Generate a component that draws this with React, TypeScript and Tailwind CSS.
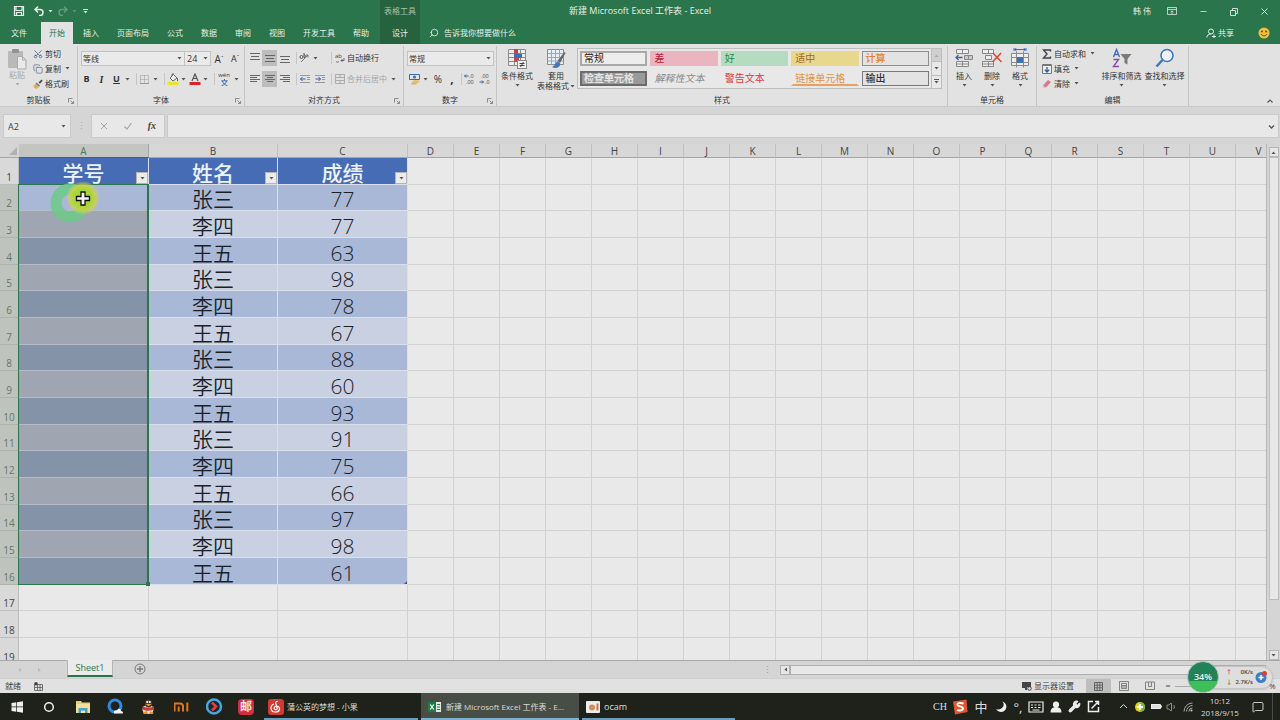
import React from 'react';
import { Minus, X, Search, Copy, Scissors, Wrench, Volume1, MessageSquare } from 'lucide-react';

type Kids = { children?: React.ReactNode };

function Caret({ light = false }: { light?: boolean }) {
  return (
    <svg width="5" height="3" viewBox="0 0 5 3" className="shrink-0">
      <path d="M0.5 0h4L2.5 2.6z" fill={light ? '#cfe3d7' : '#555'} />
    </svg>
  );
}

function Svg({ s = 16, h, children }: Kids & { s?: number; h?: number }) {
  return (
    <svg width={s} height={h ?? s} viewBox={`0 0 ${s} ${h ?? s}`} fill="none" className="shrink-0">
      {children}
    </svg>
  );
}

function Sep() {
  return <span className="h-3 w-px shrink-0 bg-[#c6c6c6]" />;
}

function IconBtn({ label, on = false, children }: Kids & { label: string; on?: boolean }) {
  return (
    <button
      type="button"
      aria-label={label}
      className={`flex h-4 w-[15px] shrink-0 items-center justify-center ${on ? 'bg-[#bdbdbd]' : ''}`}
    >
      {children}
    </button>
  );
}

function DropBtn({ label }: { label: string }) {
  return (
    <button type="button" aria-label={label} className="flex h-4 w-[7px] shrink-0 items-center justify-center">
      <Caret />
    </button>
  );
}

function Group({ title, width, launcher = false, children }: Kids & { title: string; width: string; launcher?: boolean }) {
  return (
    <section aria-label={title} className={`${width} flex shrink-0 flex-col border-r border-[#c4c4c4]`}>
      <div className="min-h-0 flex-1">{children}</div>
      <div className="relative h-3 text-center leading-3">
        {title}
        {launcher && (
          <button type="button" aria-label={`${title}设置`} className="absolute right-[3px] bottom-0.5">
            <Svg s={6}>
              <path d="M0.5 4.5v-4h4M2.5 2.5l3 3M5.5 3v2.5H3" stroke="#777" strokeWidth="0.8" />
            </Svg>
          </button>
        )}
      </div>
    </section>
  );
}

function BigBtn({ icon, lines, width }: { icon: React.ReactNode; lines: string[]; width: string }) {
  return (
    <button type="button" className={`${width} flex shrink-0 flex-col items-center whitespace-nowrap`}>
      <span className="flex h-[23px] items-start">{icon}</span>
      {lines.length === 1 ? (
        <>
          <span className="leading-[10px]">{lines[0]}</span>
          <span className="flex h-[9px] items-center">
            <Caret />
          </span>
        </>
      ) : (
        <>
          <span className="leading-[10px]">{lines[0]}</span>
          <span className="flex items-center gap-px leading-[10px]">
            {lines[1]}
            <Caret />
          </span>
        </>
      )}
    </button>
  );
}

function SmallBtn({ icon, text, drop = false }: { icon: React.ReactNode; text: string; drop?: boolean }) {
  return (
    <button type="button" className="flex h-[15px] items-center whitespace-nowrap">
      <span className="flex w-[15px] items-center justify-center">{icon}</span>
      {text}
      {drop && (
        <span className="flex h-full items-center pl-1">
          <Caret />
        </span>
      )}
    </button>
  );
}

function Lines({ ys, xs }: { ys: number[]; xs: [number, number][] }) {
  return (
    <Svg s={10}>
      {ys.map((y, i) => (
        <path key={y} d={`M${xs[i % xs.length][0]} ${y}.5H${xs[i % xs.length][1]}`} stroke="#666" />
      ))}
    </Svg>
  );
}

function Ribbon() {
  const styles: [string, string][] = [
    ['常规', 'border-2 border-[#a9a9a9] bg-[#ededed] text-[#222]'],
    ['差', 'border-2 border-transparent bg-[#eab4c0] text-[#b01f3c]'],
    ['好', 'border-2 border-transparent bg-[#b5dcc0] text-[#2a8a44]'],
    ['适中', 'border-2 border-transparent bg-[#e8d88e] text-[#9c6a1c]'],
    ['计算', 'border border-[#8e8e8e] bg-[#e3e3e3] px-[3px] text-[#e0802f] font-medium'],
    ['检查单元格', 'border-2 border-[#6b6b6b] bg-[#9a9a9a] font-bold text-[#e4e4e4]'],
    ['解释性文本', 'border-2 border-transparent italic text-[#8a8a8a]'],
    ['警告文本', 'border-2 border-transparent text-[#dd3a3a]'],
    ['链接单元格', 'border-2 border-transparent border-b-[#e8a063] text-[#e09447]'],
    ['输出', 'border border-[#7a7a7a] bg-[#e3e3e3] px-[3px] text-[#333] font-medium'],
  ];
  return (
    <div className="flex h-[63px] shrink-0 border-b border-[#c9c9c9] bg-[#e2e2e2] pt-0.5 text-[8px] text-[#333]">
      <Group title="剪贴板" width="w-[78px]" launcher>
        <div className="flex pl-1">
          <button type="button" className="flex w-[26px] flex-col items-center pt-0.5 text-[#a8a8a8]">
            <Svg s={20} h={22}>
              <rect x="1" y="3" width="15" height="17" rx="1" fill="#b9b9b9" />
              <rect x="5" y="1" width="7" height="4" rx="1" fill="#929292" />
              <path d="M10.500 8.500h5l3.500 3.500v9h-8.500z" fill="#e9e9e9" stroke="#aaa" />
              <path d="M15.500 8.500v3.500h3.500" stroke="#aaa" />
            </Svg>
            <span className="leading-[10px]">粘贴</span>
            <span className="flex h-2 items-center opacity-40">
              <Caret />
            </span>
          </button>
          <div className="flex flex-col items-start">
            <SmallBtn icon={<Scissors size={10} color="#4d6b91" className="-rotate-90" />} text="剪切" />
            <SmallBtn icon={<Copy size={10} color="#6f7f93" />} text="复制" drop />
            <SmallBtn
              icon={
                <Svg s={10}>
                  <path d="M5.500 3.500L8.500 0.500l1.200 1.200-2.700 3z" fill="#4d4d4d" />
                  <path d="M3.500 3.500l3.500 3-1 1.300-3.500-3z" fill="#777" />
                  <path d="M2.300 4.800L0 7.500l3 2.500 3-1.800z" fill="#e3ad4c" />
                </Svg>
              }
              text="格式刷"
            />
          </div>
        </div>
      </Group>

      <Group title="字体" width="w-[167px]" launcher>
        <div className="mt-[5px] flex h-[15px] items-center pl-[3px]">
          <label className="relative flex h-[15px] w-[104px] items-center">
            <select aria-label="字体" className="h-full w-full appearance-none border border-[#c3c3c3] bg-[#eaeaea] px-px">
              <option>等线</option>
            </select>
            <span className="pointer-events-none absolute right-[3px]">
              <Caret />
            </span>
          </label>
          <label className="relative flex h-[15px] w-[26px] items-center">
            <select aria-label="字号" className="h-full w-full appearance-none border border-l-0 border-[#c3c3c3] bg-[#eaeaea] px-0.5 text-[9px]">
              <option>24</option>
            </select>
            <span className="pointer-events-none absolute right-[3px]">
              <Caret />
            </span>
          </label>
          <button type="button" className="w-4 text-center text-[10px] leading-3">
            A<sup className="text-[6px]">ˆ</sup>
          </button>
          <button type="button" className="w-4 text-center text-[9px] leading-3">
            A<sup className="text-[6px]">ˇ</sup>
          </button>
        </div>
        <div className="mt-[5px] flex items-center pl-px">
          <IconBtn label="加粗"><b className="text-[9px]">B</b></IconBtn>
          <IconBtn label="倾斜"><i className="font-['Liberation_Serif',serif] text-[10px] font-bold">I</i></IconBtn>
          <IconBtn label="下划线"><u className="text-[9px] font-bold">U</u></IconBtn>
          <DropBtn label="下划线样式" />
          <span className="w-[5px]" />
          <Sep />
          <IconBtn label="边框">
            <Svg s={9}>
              <path d="M0.500 0.500h8v8h-8zM4.500 0.500v8M0.500 4.500h8" stroke="#9a9a9a" strokeDasharray="1 1" />
              <path d="M0 8.500h9" stroke="#999" />
            </Svg>
          </IconBtn>
          <DropBtn label="边框样式" />
          <span className="w-[5px]" />
          <Sep />
          <IconBtn label="填充颜色">
            <Svg s={12}>
              <path d="M3 5l3.500-3.500L10 5 6 8z" fill="#efefef" stroke="#666" />
              <path d="M5 3V1h2M10.500 5v3" stroke="#666" />
              <rect x="0.500" y="9" width="11" height="3" fill="#e8e52a" />
            </Svg>
          </IconBtn>
          <DropBtn label="填充颜色列表" />
          <IconBtn label="字体颜色">
            <Svg s={12}>
              <path d="M3 8L6 1l3 7M4 5.500h4" stroke="#555" strokeWidth="1.200" />
              <rect x="0.500" y="9" width="11" height="3" fill="#d8252b" />
            </Svg>
          </IconBtn>
          <DropBtn label="字体颜色列表" />
          <span className="w-[5px]" />
          <Sep />
          <button type="button" className="flex h-4 w-[18px] flex-col items-center justify-center">
            <span className="text-[6px] leading-[7px]">wén</span>
            <Svg s={7}>
              <path d="M3.500 0v1.500M0.300 1.800h6.400M5.500 2C5 4.500 3 6 0.500 6.700M1.500 2C2 4.500 4 6 6.500 6.700" stroke="#2f62a8" strokeWidth="0.900" />
            </Svg>
          </button>
          <DropBtn label="拼音选项" />
        </div>
      </Group>

      <Group title="对齐方式" width="w-[159px]" launcher>
        <div className="mt-1 flex h-4 items-center pl-[2px]">
          <IconBtn label="顶端对齐"><Lines ys={[0, 3, 6]} xs={[[0, 10], [1, 9]]} /></IconBtn>
          <IconBtn label="垂直居中" on><Lines ys={[2, 5, 8]} xs={[[0, 10], [1, 9]]} /></IconBtn>
          <IconBtn label="底端对齐"><Lines ys={[3, 6, 9]} xs={[[0, 10], [1, 9]]} /></IconBtn>
          <span className="w-[4px]" />
          <Sep />
          <IconBtn label="方向">
            <Svg s={12}>
              <path d="M2 10l7-7M9 3H7M9 3v2.500" stroke="#777" />
              <circle cx="2.500" cy="5" r="1.500" stroke="#555" />
              <path d="M5 1v4.500c2 0 2-3 0-2.500" stroke="#555" />
            </Svg>
          </IconBtn>
          <DropBtn label="方向列表" />
          <span className="w-[12px]" />
          <Sep />
          <SmallBtn
            icon={
              <Svg s={10}>
                <text x="0" y="5" fontSize="6" fill="#444">ab</text>
                <path d="M1 8.500c1 1 2 .5 3 0M9 5v2.500H6l1.500-1.500M6 7.500L7.500 9" stroke="#6a6a6a" />
              </Svg>
            }
            text="自动换行"
          />
        </div>
        <div className="mt-[5px] flex h-4 items-center pl-[2px]">
          <IconBtn label="左对齐"><Lines ys={[1, 3, 5, 7]} xs={[[0, 10], [0, 7]]} /></IconBtn>
          <IconBtn label="居中" on><Lines ys={[1, 3, 5, 7]} xs={[[0, 10], [2, 8]]} /></IconBtn>
          <IconBtn label="右对齐"><Lines ys={[1, 3, 5, 7]} xs={[[0, 10], [3, 10]]} /></IconBtn>
          <span className="w-[4px]" />
          <Sep />
          <IconBtn label="减少缩进">
            <Svg s={10}>
              <path d="M0 1.500h10M7 3.500h3M7 5.500h3M0 8.500h10" stroke="#999" />
              <path d="M5.500 5H0.500M2.500 3L0.500 5l2 2" stroke="#2f62a8" />
            </Svg>
          </IconBtn>
          <IconBtn label="增加缩进">
            <Svg s={10}>
              <path d="M0 1.500h10M7 3.500h3M7 5.500h3M0 8.500h10" stroke="#999" />
              <path d="M0.500 5h5M3.500 3l2 2-2 2" stroke="#2f62a8" />
            </Svg>
          </IconBtn>
          <span className="w-[4px]" />
          <Sep />
          <span className="flex text-[#a5a5a5]">
            <SmallBtn
              icon={
                <Svg s={10}>
                  <path d="M0.500 0.500h9v9h-9zM0.500 3.500h9M0.500 6.500h9M5 0.500v3M5 6.500v3" stroke="#aaa" />
                </Svg>
              }
              text="合并后居中"
              drop
            />
          </span>
        </div>
      </Group>

      <Group title="数字" width="w-[93px]" launcher>
        <label className="relative mt-[5px] ml-[3px] flex h-[15px] w-[87px] items-center">
          <select aria-label="数字格式" className="h-full w-full appearance-none border border-[#c3c3c3] bg-[#eaeaea] px-px">
            <option>常规</option>
          </select>
          <span className="pointer-events-none absolute right-[3px]">
            <Caret />
          </span>
        </label>
        <div className="mt-[5px] flex items-center pl-[3px]">
          <IconBtn label="会计数字格式">
            <Svg s={12}>
              <path d="M0.500 1.500h10v5h-10z" stroke="#3c6ca8" />
              <circle cx="5.500" cy="4" r="1.500" fill="#3c6ca8" />
              <ellipse cx="7" cy="8.500" rx="3.500" ry="1.500" fill="#e6c074" />
              <ellipse cx="5" cy="10.500" rx="3" ry="1.300" fill="#e2b568" />
            </Svg>
          </IconBtn>
          <DropBtn label="会计数字格式列表" />
          <button type="button" className="w-[18px] text-center text-[10px]">%</button>
          <button type="button" className="w-[10px] text-center text-[12px] leading-[8px] font-bold">,</button>
          <span className="w-[4px]" />
          <Sep />
          <button type="button" aria-label="增加小数位数" className="flex w-[15px] justify-center">
            <Svg s={12}>
              <text x="5" y="5" fontSize="5.500" fill="#444">.0</text>
              <text x="2" y="11" fontSize="5.500" fill="#444">.00</text>
              <path d="M4.500 3h-4M2 1.500L0.500 3 2 4.500" stroke="#2f62a8" />
            </Svg>
          </button>
          <button type="button" aria-label="减少小数位数" className="flex w-[15px] justify-center">
            <Svg s={12}>
              <text x="2" y="5" fontSize="5.500" fill="#444">.00</text>
              <text x="6" y="11" fontSize="5.500" fill="#444">.0</text>
              <path d="M0.500 9h4M3 7.500L4.500 9 3 10.500" stroke="#2f62a8" />
            </Svg>
          </button>
        </div>
      </Group>

      <Group title="样式" width="w-[451px]">
        <div className="flex pt-0.5 pl-[2px]">
          <BigBtn
            width="w-9"
            lines={['条件格式']}
            icon={
              <Svg s={20} h={21}>
                <path d="M1.500 1.500h17v16h-17zM1.500 5.500h17M1.500 9.500h17M1.500 13.500h17M7.500 1.500v16M13.500 1.500v16" stroke="#8a8a8a" fill="#ededed" />
                <rect x="7" y="1" width="4" height="5" fill="#c44848" />
                <rect x="7" y="6" width="8" height="4" fill="#3f6fb3" />
                <rect x="7" y="10" width="5" height="4" fill="#c44848" />
                <rect x="10.500" y="12.500" width="9" height="8" fill="#f1f1f1" stroke="#888" />
                <path d="M12.500 15.500h5M12.500 17.500h5M16.500 14l-3 5" stroke="#444" />
              </Svg>
            }
          />
          <BigBtn
            width="w-[42px]"
            lines={['套用', '表格格式']}
            icon={
              <Svg s={20} h={21}>
                <path d="M1.500 1.500h16v15h-16z" fill="#e8eef5" stroke="#8a8a8a" />
                <path d="M1.500 5.500h16M1.500 9.500h16M1.500 13h16M5.500 1.500v15M9.500 1.500v15M13.500 1.500v15" stroke="#92a9c6" />
                <path d="M19.500 5l-1.200-1L11.500 13l2.500 2z" fill="#666" />
                <path d="M11.500 13.500c-2 .5-1.500 4-5.500 5.500 3.500 2 7.500 1 8.500-3z" fill="#3f77bd" />
              </Svg>
            }
          />
          <div className="flex h-[41px] w-[365px] border border-[#bdbdbd] bg-[#e8e8e8]">
            <ul className="grid min-w-0 flex-1 grid-cols-5 gap-x-[3px] gap-y-1 p-0.5 text-[10px]">
              {styles.map(([name, cls]) => (
                <li key={name} className="flex">
                  <button type="button" className={`flex h-[15px] w-full items-center px-0.5 text-left leading-[11px] whitespace-nowrap ${cls}`}>
                    {name}
                  </button>
                </li>
              ))}
            </ul>
            <div className="flex w-[10px] flex-col border-l border-[#bdbdbd]">
              <button type="button" aria-label="上一行" className="flex flex-1 items-center justify-center bg-[#d0d0d0]">
                <span className="rotate-180 opacity-30"><Caret /></span>
              </button>
              <button type="button" aria-label="下一行" className="flex flex-1 items-center justify-center border-t border-[#bdbdbd]">
                <Caret />
              </button>
              <button type="button" aria-label="其他" className="flex flex-1 flex-col items-center justify-center gap-px border-t border-[#bdbdbd]">
                <span className="h-px w-[5px] bg-[#555]" />
                <Caret />
              </button>
            </div>
          </div>
        </div>
      </Group>

      <Group title="单元格" width="w-[89px]">
        <div className="flex pt-0.5 pl-[2px]">
          <BigBtn
            width="w-7"
            lines={['插入']}
            icon={
              <Svg s={20}>
                <path d="M2.500 1.500h12v4h-12zM8.500 1.500v4M2.500 13.500h12v5h-12zM8.500 13.500v5M2.500 16h12" stroke="#888" fill="#eee" />
                <path d="M10.500 7.500h8v4h-8zM14.500 7.500v4" stroke="#888" fill="#c9c9c9" />
                <path d="M8.500 9.500H2M4.500 7L2 9.500 4.500 12" stroke="#3b63a5" strokeWidth="1.300" />
              </Svg>
            }
          />
          <BigBtn
            width="w-7"
            lines={['删除']}
            icon={
              <Svg s={20}>
                <path d="M0.500 1.500h11v4h-11zM6.500 1.500v4M3.500 7.500h6v4h-6zM0.500 13.500h11v5h-11zM6.500 13.500v5M0.500 16h11" stroke="#888" fill="#eee" />
                <path d="M11 5l8.500 9M19 5l-8.500 9" stroke="#d9492f" strokeWidth="1.500" />
              </Svg>
            }
          />
          <BigBtn
            width="w-7"
            lines={['格式']}
            icon={
              <Svg s={20}>
                <path d="M1.500 5.500h17v12h-17zM6.500 3.500v16M13.500 3.500v16M1.500 9.500h17M1.500 14.500h17" stroke="#8a8a8a" fill="#eee" />
                <rect x="7" y="9" width="6" height="6" fill="#3c6fb5" />
                <path d="M4 1.500h12M4 0v3M16 0v3M6.500 0L4.500 1.500l2 1.500M13.500 0l2 1.500-2 1.500" stroke="#3c6fb5" />
              </Svg>
            }
          />
        </div>
      </Group>

      <Group title="编辑" width="w-[152px]">
        <div className="flex pl-[2px]">
          <div className="flex w-[61px] flex-col items-start">
            <SmallBtn icon={<Svg s={10}><path d="M8.500 2.500v-1.500H1.500l3.500 4-3.500 4h7v-1.500" stroke="#444" strokeWidth="1.400" /></Svg>} text="自动求和" drop />
            <SmallBtn
              icon={
                <Svg s={10}>
                  <path d="M0.500 0.500h9v9h-9z" stroke="#777" fill="#eee" />
                  <path d="M0.500 1.500h9" stroke="#777" />
                  <path d="M5 3v5M2.800 5.800L5 8l2.200-2.200" stroke="#2f62a8" strokeWidth="1.300" />
                </Svg>
              }
              text="填充"
              drop
            />
            <SmallBtn
              icon={
                <Svg s={10}>
                  <path d="M1 6.500L6 1l3 2-5 5.500z" fill="#d9788c" />
                  <path d="M1 6.500l3 2-1 1-2.500-1.500z" fill="#e9b2bd" />
                </Svg>
              }
              text="清除"
              drop
            />
          </div>
          <div className="flex pt-0.5">
            <BigBtn
              width="w-[43px]"
              lines={['排序和筛选']}
              icon={
                <Svg s={20}>
                  <path d="M1.500 9l3-7.500 3 7.500M2.500 6.500h4" stroke="#3f6fb3" strokeWidth="1.400" />
                  <path d="M1.500 11.500h5l-5 7h5.500" stroke="#8b4da3" strokeWidth="1.400" />
                  <path d="M8.500 6h11l-4 5v5.500l-3-1.500v-4z" fill="#7a7a7a" />
                </Svg>
              }
            />
            <BigBtn
              width="w-[43px]"
              lines={['查找和选择']}
              icon={
                <Svg s={20}>
                  <circle cx="12" cy="7.500" r="6" stroke="#3f77bd" strokeWidth="1.600" fill="#eef2f7" />
                  <path d="M7.500 12L1.500 18.500" stroke="#3f77bd" strokeWidth="2.500" />
                </Svg>
              }
            />
          </div>
        </div>
      </Group>
      <div className="flex flex-1 items-end justify-end pr-1.5 pb-px">
        <button type="button" aria-label="折叠功能区">
          <Svg s={8}><path d="M1.500 5.500L4 3l2.500 2.500" stroke="#555" strokeWidth="1.200" /></Svg>
        </button>
      </div>
    </div>
  );
}

function TitleBar() {
  return (
    <header className="grid h-[22px] shrink-0 grid-cols-[1fr_auto_1fr] text-[8px] text-[#e6f0ea]">
      <div className="flex h-full items-center">
        <div className="flex w-[380px] items-center pl-[13px]">
          <button type="button" aria-label="保存" className="mr-[9px]">
            <Svg s={12}>
              <path d="M1.500 1.500h9v9h-9zM3 1.500v4h6v-4M3.500 10.500v-3h5v3" stroke="#e6f0ea" strokeWidth="1.200" />
            </Svg>
          </button>
          <button type="button" aria-label="撤消" className="flex items-center gap-1">
            <Svg s={10}>
              <path d="M4 0.500L1 3.500l3 3M1 3.500h5a3 3 0 0 1 0 6H5" stroke="#e6f0ea" strokeWidth="1.500" />
            </Svg>
            <Caret light />
          </button>
          <button type="button" aria-label="恢复" className="ml-[5px] flex items-center gap-1 opacity-30">
            <Svg s={10}>
              <path d="M6 0.500l3 3-3 3M9 3.500H4a3 3 0 0 0 0 6h1" stroke="#e6f0ea" strokeWidth="1.500" />
            </Svg>
            <Caret light />
          </button>
          <button type="button" aria-label="自定义快速访问工具栏" className="ml-[6px] flex flex-col items-center gap-px">
            <span className="h-px w-[5px] bg-[#cfe3d7]" />
            <Caret light />
          </button>
        </div>
        <span className="flex h-full w-10 items-center justify-center bg-[#27623f] text-[#a3c2af]">
          <span className="whitespace-nowrap">表格工具</span>
        </span>
      </div>
      <h1 className="self-center text-[9px] whitespace-pre">新建 Microsoft Excel 工作表 - Excel</h1>
      <div className="flex items-center justify-end pr-[10px]">
        <span className="mr-4">韩 伟</span>
        <button type="button" aria-label="功能区显示选项" className="mr-[22px]">
          <Svg s={10}><path d="M0.500 1.500h9v7h-9zM0.500 3.500h9M5 8V5M3.500 6.200L5 4.800l1.500 1.400" stroke="#dcebe2" strokeWidth="0.800" /></Svg>
        </button>
        <button type="button" aria-label="最小化" className="mr-[21px]"><Minus size={9} /></button>
        <button type="button" aria-label="还原" className="mr-[21px]">
          <Svg s={9}><path d="M1.500 3.500h5v5h-5zM3.500 3.500v-2h5v5h-2" stroke="#dcebe2" strokeWidth="0.900" /></Svg>
        </button>
        <button type="button" aria-label="关闭"><X size={11} strokeWidth={2} /></button>
      </div>
    </header>
  );
}

function Tabs() {
  const tabs = ['插入', '页面布局', '公式', '数据', '审阅', '视图', '开发工具', '帮助'];
  return (
    <nav className="flex h-[22px] shrink-0 items-stretch pl-[3px] text-[8px] text-[#e6f0ea]">
      <button type="button" className="mr-[6px] px-2">文件</button>
      <button type="button" className="mr-0.5 bg-[#e2e2e2] px-2 text-[#2b754c]">开始</button>
      <div className="flex gap-0.5">
        {tabs.map((t) => (
          <button key={t} type="button" className="px-2 whitespace-nowrap">{t}</button>
        ))}
      </div>
      <button type="button" className="ml-[3px] w-10 bg-[#27623f]">设计</button>
      <label className="ml-[9px] flex flex-1 items-center gap-[5px]">
        <Search size={10} strokeWidth={2} className="-scale-x-100" />
        <input aria-label="操作说明搜索" placeholder="告诉我你想要做什么" className="w-24 bg-transparent placeholder:text-[#e6f0ea]" />
      </label>
      <button type="button" className="mr-6 flex items-center gap-0.5">
        <Svg s={10}>
          <circle cx="5" cy="3.500" r="2.500" stroke="#e6f0ea" />
          <path d="M0.800 9.500c0-2 1.700-3.500 4-3.500M6 8.500h4M8 6.500v4" stroke="#e6f0ea" />
        </Svg>
        共享
      </button>
      <button type="button" aria-label="反馈" className="mr-[10px] self-center">
        <Svg s={12}>
          <circle cx="6" cy="6" r="5.500" fill="#f0bf3a" />
          <circle cx="4" cy="4.500" r="0.900" fill="#5b4512" />
          <circle cx="8" cy="4.500" r="0.900" fill="#5b4512" />
          <path d="M3 7.200c1.500 2.200 4.500 2.200 6 0" stroke="#5b4512" strokeWidth="0.900" />
        </Svg>
      </button>
    </nav>
  );
}

function FormulaBar() {
  return (
    <div className="flex h-[37px] shrink-0 items-start bg-[#d5d5d5] pt-[7px] pr-px pl-[3px] text-[9px] text-[#444]">
      <label className="relative flex h-6 w-[68px] items-center">
        <input aria-label="名称框" defaultValue="A2" className="h-full w-full border border-[#cacaca] bg-[#e8e8e8] pl-1" />
        <span className="absolute right-[5px]"><Caret /></span>
      </label>
      <span className="flex h-6 w-5 items-center justify-center text-[#aaa]">⋮</span>
      <div className="flex h-6 w-[74px] items-center justify-around border border-[#cacaca] bg-[#e8e8e8]">
        <button type="button" aria-label="取消"><Svg s={8}><path d="M1 1l6 6M7 1L1 7" stroke="#a9a9a9" /></Svg></button>
        <button type="button" aria-label="输入"><Svg s={8}><path d="M0.500 4.500L3 7l4.500-6" stroke="#a9a9a9" strokeWidth="1.200" /></Svg></button>
        <button type="button" aria-label="插入函数" className="font-['Liberation_Serif',serif] text-[10px] leading-3 font-bold italic">fx</button>
      </div>
      <label className="relative ml-0.5 flex h-6 flex-1 items-center">
        <input aria-label="编辑栏" className="h-full w-full border border-[#cacaca] bg-[#e8e8e8]" />
        <span className="absolute right-1">
          <Svg s={7}><path d="M1 2.500L3.500 5 6 2.500" stroke="#555" strokeWidth="1.300" /></Svg>
        </span>
      </label>
    </div>
  );
}

const names = ['张三', '李四', '王五'];
const scores = [77, 77, 63, 98, 78, 67, 88, 60, 93, 91, 75, 66, 97, 98, 61];
const letters = 'DEFGHIJKLMNOPQRSTUV'.split('');

function RowHead({ n }: { n: number }) {
  const sel = n >= 2 && n <= 16;
  return (
    <th
      scope="row"
      className={`border-r border-b p-0 text-center align-bottom text-[10px] leading-[14px] font-normal ${
        sel ? 'border-[#adb2ad] bg-[#bfc3bd] text-[#63796b]' : 'border-[#bdbdbd] bg-[#d9d9d9] text-[#444]'
      }`}
    >
      {n}
    </th>
  );
}

function Sheet() {
  const blank = 'border-r border-b border-[#d2d2d2] p-0';
  return (
    <main className="flex min-h-0 flex-1 bg-[#d5d5d5]">
      <div className="relative min-w-0 flex-1 overflow-hidden border-r border-[#b5b5b5] bg-[#e9e9e9]">
        <table className="w-[1282px] table-fixed border-separate border-spacing-0 text-[#1b1f27]">
          <colgroup>
            <col className="w-[19px]" />
            <col className="w-[130px]" />
            <col className="w-[129px]" />
            <col className="w-[130px]" />
            {letters.map((l) => (
              <col key={l} className="w-[46px]" />
            ))}
          </colgroup>
          <thead>
            <tr className="h-[14px] text-[10px] leading-[11px] text-[#444]">
              <th aria-label="全选" className="border-b border-[#a5a5a5] bg-[#d5d5d5] p-0">
                <span className="flex justify-end pr-0.5">
                  <Svg s={8}><path d="M8 0v8H0z" fill="#b0b0b0" /></Svg>
                </span>
              </th>
              <th className="border-r border-b border-[#a5a5a5] border-b-[#2b754c] bg-[#c3c5c1] p-0 pt-0.5 font-normal text-[#4f7560]">A</th>
              {['B', 'C', ...letters].map((l) => (
                <th key={l} className="border-r border-b border-[#c0c0c0] border-b-[#a5a5a5] bg-[#d7d7d7] p-0 pt-0.5 font-normal">{l}</th>
              ))}
            </tr>
          </thead>
          <tbody className="[&>tr]:h-[27px] [&>tr:nth-child(3n+2)]:h-[26px]">
            <tr>
              <RowHead n={1} />
              {['学号', '姓名', '成绩'].map((h) => (
                <th key={h} className="relative border-r border-b border-[#d9dfec] bg-[#456cb4] p-0 pt-[3px] text-[21px] leading-[22px] font-medium text-[#eef2f8]">
                  {h}
                  <button type="button" aria-label={`筛选${h}`} className="absolute right-0 bottom-0 flex h-3 w-3 items-center justify-center border border-[#b4b4b4] bg-[#ececec]">
                    <Caret />
                  </button>
                </th>
              ))}
              {letters.map((l) => (
                <td key={l} className={blank} />
              ))}
            </tr>
            {scores.map((score, i) => {
              const n = i + 2;
              const band = i % 2 === 0 ? 'bg-[#a9b8d7]' : 'bg-[#c9d0e2]';
              const sel = i === 0 ? 'bg-[#a9b8d7]' : i % 2 === 0 ? 'bg-[#8593a9]' : 'bg-[#9fa5b1]';
              const cell = 'border-r border-b border-[#d9dfec] p-0 pt-[3px] text-center text-[21px] leading-[22px] font-[350]';
              return (
                <tr key={n}>
                  <RowHead n={n} />
                  <td className={`border-b border-[#b4bbc9] p-0 ${sel}`} />
                  <td className={`${cell} ${band}`}>{names[i % 3]}</td>
                  <td className={`${cell} ${band}`}>{score}</td>
                  {letters.map((l) => (
                    <td key={l} className={blank} />
                  ))}
                </tr>
              );
            })}
            {[17, 18, 19].map((n) => (
              <tr key={n}>
                <RowHead n={n} />
                {['A', 'B', 'C', ...letters].map((l) => (
                  <td key={l} className={blank} />
                ))}
              </tr>
            ))}
          </tbody>
        </table>
        <div className="pointer-events-none absolute top-10 left-[18px] h-[401px] w-[131px] border border-r-2 border-[#2b754c]">
          <span className="absolute -right-[3px] -bottom-0.5 h-1 w-1 bg-[#2b754c]" />
        </div>
        <span className="pointer-events-none absolute top-[437px] left-[404px]">
          <Svg s={3}><path d="M3 0v3H0z" fill="#3b5590" /></Svg>
        </span>
        <div className="pointer-events-none absolute top-9 left-12">
          <Svg s={54}>
            <defs>
              <radialGradient id="halo">
                <stop offset="0" stopColor="#b4dc1c" />
                <stop offset="0.450" stopColor="#a4d82c" stopOpacity="0.950" />
                <stop offset="0.750" stopColor="#c8d24a" stopOpacity="0.900" />
                <stop offset="1" stopColor="#d4d46a" stopOpacity="0" />
              </radialGradient>
            </defs>
            <circle cx="22" cy="23" r="14" stroke="#6cc988" strokeOpacity="0.850" strokeWidth="11" />
            <circle cx="35" cy="18" r="17" fill="url(#halo)" />
            <path d="M33 12h4v4.500h4.500v4H37V25h-4v-4.500h-4.500v-4H33z" fill="#f5f5f5" stroke="#111" strokeWidth="1.300" />
          </Svg>
        </div>
      </div>
      <div className="flex w-[13px] flex-col items-center pt-[3px]">
        <button type="button" aria-label="向上滚动" className="flex h-[10px] w-[10px] items-center justify-center border border-[#b5b5b5] bg-[#e6e6e6]">
          <span className="rotate-180"><Caret /></span>
        </button>
        <div className="mb-[50px] w-[10px] flex-1 border border-[#bdbdbd] bg-[#e8e8e8]" />
        <button type="button" aria-label="向下滚动" className="flex h-[10px] w-[10px] items-center justify-center border border-[#b5b5b5] bg-[#e6e6e6]">
          <Caret />
        </button>
      </div>
    </main>
  );
}

function SheetTabs() {
  return (
    <div className="flex h-[18px] shrink-0 items-start border-t border-[#a8a8a8] bg-[#d5d5d5] text-[9px]">
      <span className="flex h-[17px] w-[67px] items-center gap-[15px] pl-[18px] text-[#bbb]">
        <Svg s={4}><path d="M3 0v4L0 2z" fill="#bbb" /></Svg>
        <Svg s={4}><path d="M1 0v4l3-2z" fill="#bbb" /></Svg>
      </span>
      <button type="button" className="-mt-px h-[17px] w-[46px] border-x border-b-2 border-x-[#b5b5b5] border-b-[#2b754c] bg-[#ebebeb] text-[#2b754c]">Sheet1</button>
      <button type="button" aria-label="新工作表" className="mt-0.5 ml-[21px]">
        <Svg s={12}>
          <circle cx="6" cy="6" r="5" stroke="#777" />
          <path d="M6 3v6M3 6h6" stroke="#777" strokeWidth="1.300" />
        </Svg>
      </button>
      <div className="flex h-[17px] flex-1 items-center justify-end pr-[14px]">
        <span className="mr-2 text-[#999]">⋮</span>
        <button type="button" aria-label="向左滚动" className="flex h-[10px] w-[10px] items-center justify-center border border-[#b0b0b0] bg-[#e6e6e6]">
          <span className="rotate-90"><Caret /></span>
        </button>
        <div className="h-[10px] w-[476px] border border-[#b0b0b0] bg-[#e8e8e8]" />
      </div>
    </div>
  );
}

function StatusBar() {
  return (
    <footer className="relative flex h-[15px] shrink-0 items-center border-t border-[#cfcfcf] bg-[#e1e1e1] pl-[5px] text-[8px] text-[#444]">
      就绪
      <span className="ml-[13px]">
        <Svg s={9}>
          <path d="M0.500 2.500h8v6h-8zM0.500 5.500h8M3.500 2.500v6M6 2.500v6" stroke="#555" strokeWidth="0.800" />
          <circle cx="2" cy="1.800" r="1.800" fill="#444" />
        </Svg>
      </span>
      <span className="flex-1" />
      <button type="button" className="mr-3 flex items-center gap-0.5">
        <Svg s={10}>
          <path d="M0 1h9v5H5v3H3V7H0z" fill="#444" />
          <circle cx="7.500" cy="7.500" r="1.800" stroke="#444" fill="#e1e1e1" />
        </Svg>
        显示器设置
      </button>
      <button type="button" aria-label="普通" className="flex h-[14px] w-[25px] items-center justify-center bg-[#bebebe]">
        <Svg s={9}><path d="M0.500 0.500h8v8h-8zM0.500 3.200h8M0.500 5.800h8M3.200 0.500v8M5.800 0.500v8" stroke="#666" /></Svg>
      </button>
      <button type="button" aria-label="页面布局视图" className="flex w-[26px] justify-center">
        <Svg s={10}><path d="M0.500 0.500h9v9h-9zM2.500 2.500h5v5h-5zM3 4.500h4M3 6h4" stroke="#777" strokeWidth="0.900" /></Svg>
      </button>
      <button type="button" aria-label="分页预览" className="flex w-[26px] justify-center">
        <Svg s={10}><path d="M0.500 1v7.500h9V1zM3.500 1v4.500h3V1" stroke="#777" strokeWidth="0.900" /></Svg>
      </button>
      <button type="button" aria-label="缩小" className="flex w-[10px] justify-center"><Minus size={6} strokeWidth={4} /></button>
      <span className="ml-0.5 h-px w-[90px] bg-[#aaa]" />
      <span className="w-[15px] pl-1">%</span>
      <div className="absolute -top-[18px] right-[7px] flex h-8 items-center">
        <div className="flex h-[23px] w-[74px] items-center rounded-full border border-[#c4c4c4] bg-[#dedede] pr-1 pl-[26px] text-[6px] leading-[10px] text-[#444] shadow">
          <span className="flex flex-1 flex-col">
            <span className="flex justify-between pr-px"><b className="text-[#d1495a]">↑</b><span className="font-semibold">0K/s</span></span>
            <span className="flex justify-between pr-px"><b className="text-[#3d9d68]">↓</b><span className="font-semibold">2.7K/s</span></span>
          </span>
          <Svg s={14}>
            <circle cx="7" cy="7.500" r="5.500" fill="#3f7fc6" />
            <path d="M7 5v5M4.500 7.500h5" stroke="#fff" strokeWidth="1.500" />
            <circle cx="10.500" cy="3.500" r="2.500" fill="#d9413b" />
          </Svg>
        </div>
        <div className="absolute -left-[12px] flex h-8 w-8 items-center justify-center overflow-hidden rounded-full border border-[#b9c9bf] bg-[#218358] text-[9px] font-semibold text-[#e8f5ec]">
          <span className="absolute inset-x-0 bottom-0 h-[11px] bg-[#3fbf5a]" />
          <span className="relative">34%</span>
        </div>
      </div>
    </footer>
  );
}

function TaskBtn({ label, children }: Kids & { label: string }) {
  return (
    <button type="button" aria-label={label} className="flex h-full w-[33px] items-center justify-center">
      {children}
    </button>
  );
}

function Taskbar() {
  return (
    <div className="flex h-[27px] shrink-0 bg-[#1e221b] text-[8px] text-[#dcdcdc]">
      <TaskBtn label="开始">
        <Svg s={12}><path d="M0.500 2l4.800-.7v4.300H0.500zM6 1.200L12 .3v5.300H6zM0.500 6.300h4.800v4.400L0.500 10zM6 6.300h6v5.400l-6-.9z" fill="#eee" /></Svg>
      </TaskBtn>
      <TaskBtn label="小娜"><Svg s={12}><circle cx="5" cy="6" r="4.300" stroke="#eee" strokeWidth="1.500" /></Svg></TaskBtn>
      <TaskBtn label="文件资源管理器">
        <Svg s={16}>
          <path d="M1 2h5l1 1.500h8V14H1z" fill="#e9cf73" />
          <path d="M1 5h14v9H1z" fill="#f3e09a" />
          <path d="M3.500 14v-5h9v5h-2.500v-2.500h-4V14z" fill="#45a3cf" />
        </Svg>
      </TaskBtn>
      <TaskBtn label="浏览器">
        <Svg s={17}>
          <circle cx="8" cy="8" r="6" stroke="#2f8be0" strokeWidth="3" />
          <path d="M7 15.500c-1-3 2-4 3-3 1-2.500 4-2 4 .5 2.500.2 2.500 2.500 1 2.500z" fill="#f2f2f2" />
        </Svg>
      </TaskBtn>
      <TaskBtn label="QQ">
        <Svg s={16}>
          <ellipse cx="7" cy="10.500" rx="5.500" ry="4.500" fill="#e8e8e8" />
          <ellipse cx="7.500" cy="4.500" rx="3.500" ry="4" fill="#4a3a32" />
          <circle cx="6.200" cy="3" r="1.100" fill="#fff" />
          <circle cx="8.800" cy="3" r="1.100" fill="#fff" />
          <path d="M4.500 5h6l-3 2z" fill="#eea52c" />
          <path d="M1.500 7c3 2 9 2 11.500 0v3.500c-3 1.500-8 1.700-11.500 0z" fill="#cf3a2c" />
          <path d="M2 13l4-1 1 3H2.500zM8 15l1-3 3.500 1.500-.5 1.500z" fill="#e8962a" />
        </Svg>
      </TaskBtn>
      <TaskBtn label="小米">
        <Svg s={16}><path d="M0.500 12.500V4.500h5.500c2 0 3 1 3 3v5M4.700 7.500v5M13.300 3.500v9" stroke="#e8731f" strokeWidth="2" /></Svg>
      </TaskBtn>
      <TaskBtn label="播放器">
        <Svg s={17}>
          <circle cx="8" cy="8.500" r="7" stroke="#49a7dc" strokeWidth="2.500" fill="#1c2430" />
          <path d="M6 4.500l4 4-4 4" stroke="#e0433c" strokeWidth="2.600" />
        </Svg>
      </TaskBtn>
      <button type="button" aria-label="邮箱" className="flex h-full w-[30px] items-center justify-center">
        <span className="flex h-4 w-4 items-center justify-center rounded-sm bg-[#d42d3d] text-[12px] leading-4 font-bold text-[#f2e9e9]">邮</span>
      </button>
      <button type="button" className="ml-[3px] flex w-[154px] items-center gap-[3px] border-b-2 border-[#6d9dbd] pt-0.5 pl-1">
        <Svg s={16}>
          <rect x="0" y="0" width="16" height="16" rx="3" fill="#d33a31" />
          <path d="M9.800 2.500c-1.500-.3-2.300.8-2 2l1.500 5a1.600 1.600 0 1 1-2-2C10 6.500 12 8 11.500 10.500c-1 3.500-8 3.500-8.500-1C2.800 7 4.500 5.500 6 5" stroke="#fff" strokeWidth="1.200" />
        </Svg>
        蒲公英的梦想 - 小果
      </button>
      <button type="button" className="ml-[3px] flex w-[158px] items-center gap-1 border-b-2 border-[#7fb0cf] bg-[#484e45] pt-0.5 pl-[7px] whitespace-nowrap">
        <Svg s={14}>
          <rect x="0" y="2" width="8" height="10" fill="#1f7a48" />
          <rect x="8" y="2" width="5" height="10" fill="#dfe9e2" />
          <path d="M9 4.500h3M9 7h3M9 9.500h3" stroke="#1f7a48" />
          <path d="M2.200 4.500l3.600 5M5.800 4.500l-3.600 5" stroke="#fff" strokeWidth="1.200" />
        </Svg>
        新建 Microsoft Excel 工作表 - E...
      </button>
      <button type="button" className="ml-[3px] flex w-[153px] items-center gap-1 border-b-2 border-[#6d9dbd] pt-0.5 pl-1 text-[9px]">
        <Svg s={14}>
          <rect x="0" y="1" width="14" height="12" rx="1" fill="#ececec" />
          <circle cx="6" cy="7.500" r="3" fill="#d98a5a" />
          <path d="M11.500 3.500v7" stroke="#c8744a" strokeWidth="2" />
        </Svg>
        ocam
      </button>
      <div className="flex flex-1 items-center justify-end">
        <span className="w-[17px] font-['Liberation_Serif',serif] text-[10px] leading-4">CH</span>
        <span className="flex w-5 justify-center">
          <Svg s={16}>
            <path d="M1 2.500L14.500 0.500 15.500 13 3 15.500z" fill="#e2552f" />
            <path d="M11.500 4.500C8 3.500 5 4 5.500 6c.5 1.800 5.500 1 5.500 3.500 0 2-4 2.500-6 1.500" stroke="#fff" strokeWidth="1.900" />
          </Svg>
        </span>
        <span className="w-[22px] text-center text-[13px] leading-4">中</span>
        <span className="flex w-[18px] justify-center">
          <Svg s={12}><path d="M7.500 0.500c3 3.500 0 8.500-6.500 8 3.500 4 9.500 3 10.300-2C11.800 3.500 10 1.500 7.500 0.500z" fill="#eee" /></Svg>
        </span>
        <span className="w-4 text-center text-[13px] leading-4">°,</span>
        <span className="flex w-5 justify-center">
          <Svg s={16} h={12}>
            <path d="M1 1h14v10H1zM3 4h2M6.500 4h2M10 4h2.500M3 6.500h2M6.500 6.500h2M10 6.500h2.500M4.500 9h7" stroke="#eee" strokeWidth="1.200" />
          </Svg>
        </span>
        <span className="flex w-5 justify-center">
          <Svg s={12}><path d="M6 0.500a3 3 0 0 1 1.500 5.700c2.500.4 4 2 4 5.300H.5c0-3.300 1.500-4.900 4-5.300A3 3 0 0 1 6 .5z" fill="#eee" /></Svg>
        </span>
        <span className="flex w-[17px] justify-center"><Wrench size={13} fill="#eee" color="#eee" /></span>
        <span className="flex w-5 justify-center">
          <Svg s={13}><path d="M6 1.500H1.500v10h10V7M4.500 8.500l7-7M8 1.500h3.500V5" stroke="#eee" strokeWidth="1.500" /></Svg>
        </span>
        <span className="ml-3 flex w-[17px] justify-center"><Svg s={9}><path d="M1 6l3.500-3.500L8 6" stroke="#ddd" /></Svg></span>
        <span className="flex w-4 justify-center">
          <Svg s={12}><circle cx="6" cy="6" r="5" fill="#dccf2c" /><path d="M6 1a5 5 0 0 1 0 10z" fill="#7cb83a" /><path d="M6 3v6M3 6h6" stroke="#fff" strokeWidth="1.800" /></Svg>
        </span>
        <span className="flex w-4 justify-center"><Svg s={11} h={7}><path d="M0 1h9v5H0zM9.500 2.500h1.500v2H9.500z" fill="#ddd" /><path d="M0.500 1.500h9v4h-9z" stroke="#eee" /></Svg></span>
        <span className="flex w-4 justify-center"><Volume1 size={12} color="#bbb" strokeWidth={1.500} /></span>
        <span className="flex w-4 justify-center">
          <Svg s={10}>
            <path d="M1 9.500A8.500 8.500 0 0 1 9.500 1M3.500 9.500a6 6 0 0 1 6-6M6 9.500A3.500 3.500 0 0 1 9.500 6" stroke="#a8a8a8" />
            <circle cx="8.500" cy="8.500" r="1" fill="#ccc" />
          </Svg>
        </span>
        <time className="w-12 text-center leading-3">
          <span className="block">10:12</span>
          <span className="block">2018/9/15</span>
        </time>
        <button type="button" aria-label="通知" className="flex w-7 justify-center"><MessageSquare size={12} strokeWidth={1.800} /></button>
        <span className="h-full w-2 border-l border-[#4a4d47]" />
      </div>
    </div>
  );
}

export default function App() {
  return (
    <div className="flex h-screen flex-col overflow-hidden bg-[#2b754c] font-['Open_Sans','Noto_Sans_CJK_SC',sans-serif]">
      <TitleBar />
      <Tabs />
      <Ribbon />
      <FormulaBar />
      <Sheet />
      <SheetTabs />
      <StatusBar />
      <Taskbar />
    </div>
  );
}
